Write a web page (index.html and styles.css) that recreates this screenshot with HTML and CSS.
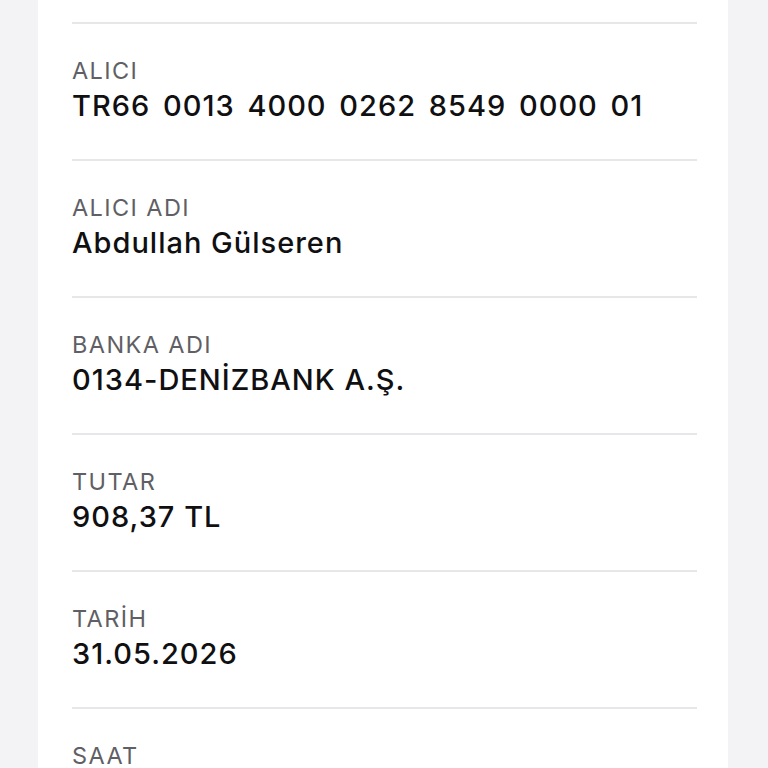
FILE: index.html
```html
<!DOCTYPE html>
<html lang="tr">
<head>
    <meta charset="UTF-8">
    <meta name="viewport" content="width=device-width, initial-scale=1.0">
    <link rel="stylesheet" href="styles.css">
    <title>Dekont</title>
</head>
<body>
    <div class="card">
        <div class="row">
            <div class="label">ALICI</div>
            <div class="value iban">TR66 0013 4000 0262 8549 0000 01</div>
        </div>
        <div class="row">
            <div class="label">ALICI ADI</div>
            <div class="value">Abdullah Gülseren</div>
        </div>
        <div class="row">
            <div class="label">BANKA ADI</div>
            <div class="value">0134-DENİZBANK A.Ş.</div>
        </div>
        <div class="row">
            <div class="label">TUTAR</div>
            <div class="value">908,37 TL</div>
        </div>
        <div class="row">
            <div class="label">TARİH</div>
            <div class="value">31.05.2026</div>
        </div>
        <div class="row">
            <div class="label">SAAT</div>
        </div>
    </div>
</body>
</html>
```

FILE: styles.css
```css
html, body {
    margin: 0;
    padding: 0;
    background-color: #f3f3f5;
    font-family: "Inter", "Liberation Sans", sans-serif;
}
.card {
    margin-left: 38px;
    width: 690px;
    height: 768px;
    overflow: hidden;
    box-sizing: border-box;
    padding: 22px 31px 0 34px;
    background-color: #ffffff;
}
.row {
    border-top: 2px solid #e7e7e9;
    padding: 33px 0 35px 0;
    height: 67px;
}
.label {
    font-size: 23.5px;
    line-height: 28px;
    letter-spacing: 1.4px;
    color: #5f5f65;
}
.value {
    margin-top: 4px;
    font-size: 29px;
    line-height: 34px;
    font-weight: 500;
    letter-spacing: 1px;
    color: #101012;
}
.iban {
    word-spacing: 4px;
}
```
